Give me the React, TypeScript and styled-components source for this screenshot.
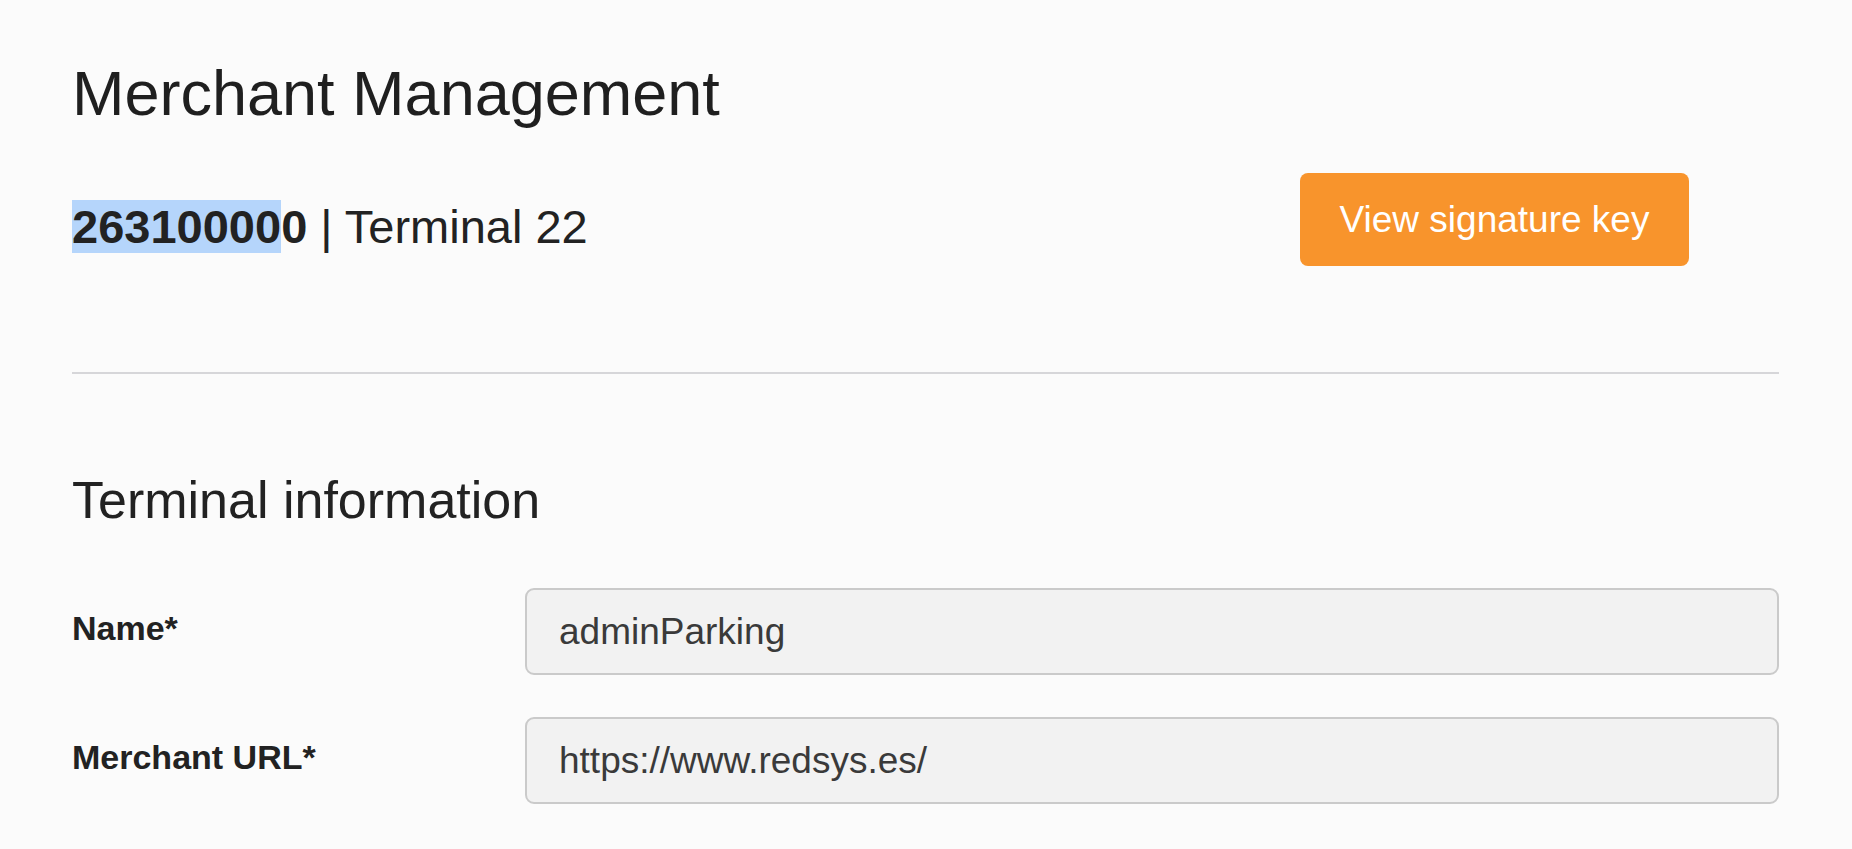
import styled, { createGlobalStyle } from 'styled-components';

const GlobalStyle = createGlobalStyle`
  html,
  body {
    margin: 0;
    background: #fbfbfb;
  }

  body {
    color: #222222;
    font-family: 'Liberation Sans', Arial, Helvetica, sans-serif;
  }
`;

const StyledPage = styled.main`
  box-sizing: border-box;
  padding: 56px 73px 0 72px;
  width: 100%;
`;

const StyledTitle = styled.h1`
  color: #1f1f1f;
  font-size: 63px;
  font-weight: 400;
  line-height: 74px;
  margin: 0;
`;

const StyledHeaderRow = styled.div`
  align-items: flex-start;
  display: flex;
  justify-content: space-between;
  margin-top: 43px;
  padding-right: 90px;
`;

const StyledMerchant = styled.p`
  font-size: 47px;
  line-height: 55px;
  margin: 26px 0 0;
`;

const StyledCode = styled.strong`
  font-weight: 700;
`;

const StyledSelection = styled.span`
  background: #b5d5fb;
`;

const StyledButton = styled.button`
  align-items: center;
  background: #f8942c;
  border: none;
  border-radius: 8px;
  color: #ffffff;
  cursor: pointer;
  display: flex;
  font-family: inherit;
  font-size: 37px;
  height: 93px;
  justify-content: center;
  padding: 0;
  width: 389px;
`;

const StyledDivider = styled.hr`
  border: none;
  border-top: 2px solid #d6d6d9;
  margin: 106px 0 0;
`;

const StyledSectionTitle = styled.h2`
  color: #222222;
  font-size: 52px;
  font-weight: 400;
  line-height: 61px;
  margin: 96px 0 0;
`;

const StyledForm = styled.form`
  display: grid;
  grid-template-columns: 453px 1fr;
  margin-top: 57px;
  row-gap: 42px;
`;

const StyledLabel = styled.label`
  align-self: center;
  color: #222222;
  font-size: 34px;
  font-weight: 700;
  padding-bottom: 6px;
`;

const StyledInput = styled.input`
  background: #f2f2f2;
  border: 2px solid #cacaca;
  border-radius: 9px;
  box-sizing: border-box;
  color: #3a3a3a;
  font-family: inherit;
  font-size: 37px;
  height: 87px;
  outline: none;
  padding: 0 32px;
  width: 100%;
`;

const fields = [
  { id: 'name', label: 'Name*', value: 'adminParking' },
  { id: 'url', label: 'Merchant URL*', value: 'https://www.redsys.es/' },
];

const App: React.FC = () => {
  return (
    <>
      <GlobalStyle />
      <StyledPage>
        <header>
          <StyledTitle>Merchant Management</StyledTitle>

          <StyledHeaderRow>
            <StyledMerchant>
              <StyledCode>
                <StyledSelection>26310000</StyledSelection>0
              </StyledCode>{' '}
              | Terminal 22
            </StyledMerchant>

            <StyledButton type="button">View signature key</StyledButton>
          </StyledHeaderRow>
        </header>

        <StyledDivider />

        <section>
          <StyledSectionTitle>Terminal information</StyledSectionTitle>

          <StyledForm>
            {fields.map((field) => (
              <>
                <StyledLabel key={`${field.id}-label`} htmlFor={field.id}>
                  {field.label}
                </StyledLabel>
                <StyledInput
                  key={`${field.id}-input`}
                  id={field.id}
                  defaultValue={field.value}
                  readOnly
                />
              </>
            ))}
          </StyledForm>
        </section>
      </StyledPage>
    </>
  );
};

export default App;
